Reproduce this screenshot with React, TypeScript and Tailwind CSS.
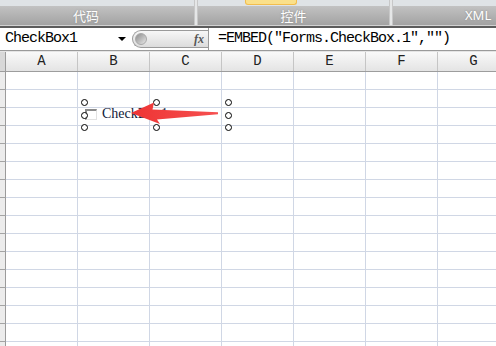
const COLUMNS = ['A', 'B', 'C', 'D', 'E', 'F', 'G']
const ROWS = Array.from({ length: 16 }, (_, i) => i)

const HANDLES = [
  { x: 84, y: 102 },
  { x: 156, y: 102 },
  { x: 228, y: 102 },
  { x: 84, y: 115 },
  { x: 228, y: 115 },
  { x: 84, y: 127 },
  { x: 156, y: 127 },
  { x: 228, y: 127 },
]

const mono = "font-['Liberation_Mono',monospace]"

const Separator: React.FC = () => (
  <div className="w-[4px] h-full bg-gradient-to-r from-[#b9b9b9] via-[#f4f6f7] to-[#b9b9b9]" />
)

const Ribbon: React.FC = () => {
  return (
    <div className="flex flex-col">
      <div className="flex h-[25px]">
        <div className="w-[194px] flex flex-col">
          <div className="h-[6px] bg-[#dfe3e6]" />
          <div className="flex-1 bg-gradient-to-b from-[#c2c2c2] to-[#a3a3a3] flex items-center justify-center pr-[22px] text-white text-[13px] font-['Noto_Sans_CJK_SC',sans-serif] [text-shadow:0_0_2px_#8a8a8a]">
            代码
          </div>
        </div>
        <Separator />
        <div className="w-[191px] flex flex-col">
          <div className="h-[6px] bg-[#dfe3e6]">
            <div className="ml-[47px] w-[52px] h-[5px] bg-[#fbe08a] border-x border-b border-[#f2bd4e] rounded-b-[3px]" />
          </div>
          <div className="flex-1 bg-gradient-to-b from-[#c2c2c2] to-[#a3a3a3] flex items-center justify-center text-white text-[13px] font-['Noto_Sans_CJK_SC',sans-serif] [text-shadow:0_0_2px_#8a8a8a]">
            控件
          </div>
        </div>
        <Separator />
        <div className="flex-1 flex flex-col">
          <div className="h-[6px] bg-[#dfe3e6]" />
          <div className="flex-1 bg-gradient-to-b from-[#c2c2c2] to-[#a3a3a3] flex items-center pl-[72px] text-white text-[13px] font-['Noto_Sans',sans-serif] [text-shadow:0_0_2px_#8a8a8a]">
            XML
          </div>
        </div>
      </div>
      <div className="h-px bg-[#d2d2d2]" />
      <div className="h-[2px] bg-[#5c5c5c]" />
    </div>
  )
}

const FormulaBar: React.FC = () => {
  return (
    <div className="flex h-[23px] bg-white border-b border-[#9a9a9a] items-center">
      <div className={`w-[113px] pl-[5px] text-[15px] tracking-[-1px] text-black ${mono}`}>CheckBox1</div>
      <div className="w-0 h-0 border-x-[4px] border-x-transparent border-t-[4px] border-t-black ml-[5px]" />
      <div className="ml-[6px] w-[76px] h-[18px] rounded-l-full border border-r-0 border-[#9a9a9a] bg-gradient-to-b from-[#f7f7f7] to-[#dcdcdc] flex items-center pl-[2px]">
        <div className="w-[12px] h-[12px] rounded-full bg-gradient-to-br from-[#8e8e8e] to-[#e8e8e8] border border-[#a8a8a8]" />
        <span className="ml-auto mr-[4px] italic font-bold text-[12px] text-[#555] font-['Liberation_Serif',serif]">fx</span>
      </div>
      <div className="w-px h-full bg-[#9a9a9a]" />
      <div className={`pl-[9px] text-[15px] tracking-[-1px] text-black ${mono}`}>=EMBED("Forms.CheckBox.1","")</div>
    </div>
  )
}

const Sheet: React.FC = () => {
  return (
    <div className="flex flex-col">
      <div className="h-px bg-[#e4e4e4]" />
      <div className="flex h-[20px] border-b border-[#9d9d9d]">
        <div className="w-[6px] shrink-0 bg-[#d8d8d8] border-r border-[#9b9b9b]" />
        {COLUMNS.map((c) => (
          <div
            key={c}
            className={`w-[72px] shrink-0 border-r border-[#c5c5c5] bg-gradient-to-b from-[#f9f9f9] to-[#e4e4e4] flex items-center justify-center text-[14px] text-[#222] ${mono}`}
          >
            {c}
          </div>
        ))}
      </div>
      {ROWS.map((r) => (
        <div key={r} className="flex h-[18px]">
          <div className="w-[6px] shrink-0 bg-[#ececec] border-r border-b border-r-[#9b9b9b] border-b-[#a4a4a4]" />
          {COLUMNS.map((c) => (
            <div key={c} className="w-[72px] shrink-0 border-r border-b border-[#d0d7e5] bg-white" />
          ))}
        </div>
      ))}
    </div>
  )
}

const CheckboxControl: React.FC = () => {
  return (
    <>
      <div className="absolute left-[85px] top-[107px] flex items-center gap-[5px]">
        <div className="w-[12px] h-[11px] border-t-2 border-l-2 border-t-[#8a8a8a] border-l-[#8a8a8a] border-b border-r border-b-[#e2e2e2] border-r-[#e2e2e2] bg-white" />
        <span className="text-[14px] leading-[14px] text-[#101838] font-['Liberation_Serif',serif]">CheckBox1</span>
      </div>
      {HANDLES.map((h, i) => (
        <div
          key={i}
          className="absolute w-[7px] h-[7px] rounded-full border border-black bg-white"
          style={{ left: h.x - 3.5, top: h.y - 3.5 }}
        />
      ))}
      <svg className="absolute left-0 top-0 pointer-events-none" width="496" height="346">
        <defs>
          <linearGradient id="arrowFill" x1="0" y1="0" x2="1" y2="0">
            <stop offset="0" stopColor="#ee3434" />
            <stop offset="1" stopColor="#f65050" />
          </linearGradient>
        </defs>
        <polygon
          points="131,113 154,102.5 152.5,109.5 218,112.2 218,114.2 157,119.5 160,124"
          fill="url(#arrowFill)"
        />
      </svg>
    </>
  )
}

export default function App() {
  return (
    <div className="relative w-[496px] h-[346px] overflow-hidden bg-white">
      <Ribbon />
      <FormulaBar />
      <Sheet />
      <CheckboxControl />
    </div>
  )
}
